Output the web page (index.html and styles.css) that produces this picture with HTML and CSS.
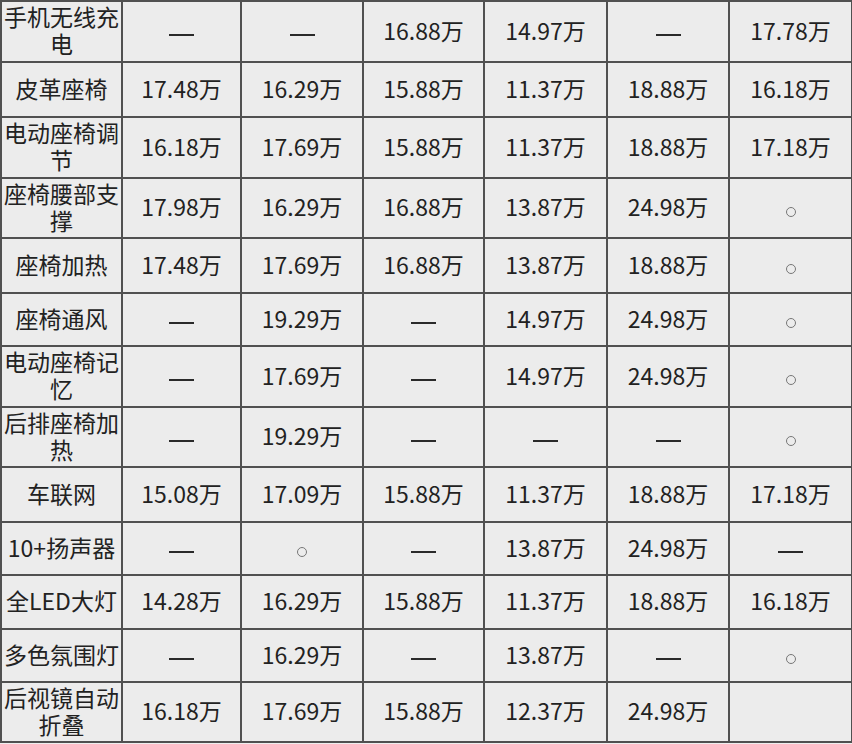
FILE: index.html
```html
<!DOCTYPE html>
<html lang="zh-CN">
<head>
<meta charset="utf-8">
<title>配置价格表</title>
<link rel="stylesheet" href="styles.css">
</head>
<body>
<table class="spec">
<colgroup>
<col class="c1"><col class="c2"><col class="c3"><col class="c4"><col class="c5"><col class="c6"><col class="c7">
</colgroup>
<tbody>
<tr class="r61"><td>手机无线充电</td><td><span class="dash"></span></td><td><span class="dash"></span></td><td>16.88万</td><td>14.97万</td><td><span class="dash"></span></td><td>17.78万</td></tr>
<tr class="r55"><td>皮革座椅</td><td>17.48万</td><td>16.29万</td><td>15.88万</td><td>11.37万</td><td>18.88万</td><td>16.18万</td></tr>
<tr class="r61"><td>电动座椅调节</td><td>16.18万</td><td>17.69万</td><td>15.88万</td><td>11.37万</td><td>18.88万</td><td>17.18万</td></tr>
<tr class="r60"><td>座椅腰部支撑</td><td>17.98万</td><td>16.29万</td><td>16.88万</td><td>13.87万</td><td>24.98万</td><td><span class="dot"></span></td></tr>
<tr class="r55"><td>座椅加热</td><td>17.48万</td><td>17.69万</td><td>16.88万</td><td>13.87万</td><td>18.88万</td><td><span class="dot"></span></td></tr>
<tr class="r53"><td>座椅通风</td><td><span class="dash"></span></td><td>19.29万</td><td><span class="dash"></span></td><td>14.97万</td><td>24.98万</td><td><span class="dot"></span></td></tr>
<tr class="r61"><td>电动座椅记忆</td><td><span class="dash"></span></td><td>17.69万</td><td><span class="dash"></span></td><td>14.97万</td><td>24.98万</td><td><span class="dot"></span></td></tr>
<tr class="r60"><td>后排座椅加热</td><td><span class="dash"></span></td><td>19.29万</td><td><span class="dash"></span></td><td><span class="dash"></span></td><td><span class="dash"></span></td><td><span class="dot"></span></td></tr>
<tr class="r55"><td>车联网</td><td>15.08万</td><td>17.09万</td><td>15.88万</td><td>11.37万</td><td>18.88万</td><td>17.18万</td></tr>
<tr class="r53"><td>10+扬声器</td><td><span class="dash"></span></td><td><span class="dot"></span></td><td><span class="dash"></span></td><td>13.87万</td><td>24.98万</td><td><span class="dash"></span></td></tr>
<tr class="r54"><td>全LED大灯</td><td>14.28万</td><td>16.29万</td><td>15.88万</td><td>11.37万</td><td>18.88万</td><td>16.18万</td></tr>
<tr class="r53"><td>多色氛围灯</td><td><span class="dash"></span></td><td>16.29万</td><td><span class="dash"></span></td><td>13.87万</td><td><span class="dash"></span></td><td><span class="dot"></span></td></tr>
<tr class="r60"><td>后视镜自动折叠</td><td>16.18万</td><td>17.69万</td><td>15.88万</td><td>12.37万</td><td>24.98万</td><td></td></tr>
</tbody>
</table>
</body>
</html>
```

FILE: styles.css
```css
html, body {
  margin: 0;
  padding: 0;
  background: #efefef;
}
.spec {
  border-collapse: collapse;
  table-layout: fixed;
  width: 851px;
  background: #ececec;
  font-family: "Noto Sans CJK SC", "Noto Sans", sans-serif;
  font-size: 23px;
  color: #222;
}
.c1 { width: 121px; }
.c2 { width: 119px; }
.c3 { width: 122px; }
.c4 { width: 121px; }
.c5 { width: 123px; }
.c6 { width: 122px; }
.c7 { width: 123px; }
.spec td {
  border: 2px solid #505050;
  text-align: center;
  vertical-align: middle;
  padding: 0 1px 3px;
  line-height: 27px;
}
.r61 td { height: 56px; }
.r60 td { height: 55px; }
.r55 td { height: 50px; }
.r54 td { height: 49px; }
.r53 td { height: 48px; }
.dot {
  display: inline-block;
  width: 8px;
  height: 8px;
  border: 1px solid #777;
  border-radius: 50%;
  vertical-align: middle;
  position: relative;
  top: 2px;
}
.dash {
  display: inline-block;
  width: 25px;
  height: 2px;
  background: #2a2a2a;
  vertical-align: middle;
  position: relative;
  top: 2px;
}
```
